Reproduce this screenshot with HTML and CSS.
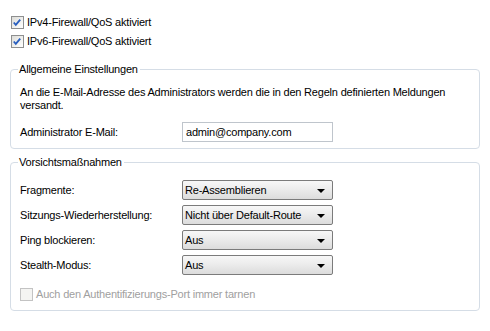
FILE: index.html
```html
<!DOCTYPE html>
<html>
<head>
<meta charset="utf-8">
<link rel="stylesheet" href="styles.css">
</head>
<body>
<div class="page">
  <label class="check-row">
    <span class="cb"><svg width="13" height="13" viewBox="0 0 13 13"><path d="M3 6.5 L5.2 9 L10 3.5" fill="none" stroke="#2a5fbf" stroke-width="2"/></svg></span>
    <span>IPv4-Firewall/QoS aktiviert</span>
  </label>
  <label class="check-row">
    <span class="cb"><svg width="13" height="13" viewBox="0 0 13 13"><path d="M3 6.5 L5.2 9 L10 3.5" fill="none" stroke="#2a5fbf" stroke-width="2"/></svg></span>
    <span>IPv6-Firewall/QoS aktiviert</span>
  </label>

  <fieldset class="group group-general">
    <legend>Allgemeine Einstellungen</legend>
    <div class="group-body">
      <p class="desc">An die E-Mail-Adresse des Administrators werden die in den Regeln definierten Meldungen versandt.</p>
      <div class="form-row first">
        <span class="lbl">Administrator E-Mail:</span>
        <span class="textbox">admin@company.com</span>
      </div>
    </div>
  </fieldset>

  <fieldset class="group group-safety">
    <legend>Vorsichtsmaßnahmen</legend>
    <div class="group-body">
      <div class="form-row first">
        <span class="lbl">Fragmente:</span>
        <span class="select">Re-Assemblieren<i class="arrow"></i></span>
      </div>
      <div class="form-row">
        <span class="lbl">Sitzungs-Wiederherstellung:</span>
        <span class="select">Nicht über Default-Route<i class="arrow"></i></span>
      </div>
      <div class="form-row">
        <span class="lbl">Ping blockieren:</span>
        <span class="select">Aus<i class="arrow"></i></span>
      </div>
      <div class="form-row">
        <span class="lbl">Stealth-Modus:</span>
        <span class="select">Aus<i class="arrow"></i></span>
      </div>
      <label class="check-row disabled">
        <span class="cb cb-disabled"></span>
        <span>Auch den Authentifizierungs-Port immer tarnen</span>
      </label>
    </div>
  </fieldset>
</div>
</body>
</html>
```

FILE: styles.css
```css
html, body {
  margin: 0;
  padding: 0;
  background: #ffffff;
}
body {
  font-family: "Liberation Sans", Arial, sans-serif;
  font-size: 11px;
  letter-spacing: -0.2px;
  color: #000;
}
.page {
  width: 470px;
  padding: 13px 10px 0 10px;
}
.check-row {
  display: flex;
  align-items: center;
  height: 19px;
  line-height: 13px;
}
.page > .check-row {
  padding-left: 1px;
}
.cb {
  width: 11px;
  height: 11px;
  border: 1px solid #8e8f8f;
  background: linear-gradient(135deg, #dcdcd8 0%, #f6f6f4 70%, #ffffff 100%);
  margin-right: 3px;
  display: inline-flex;
  flex: none;
}
.cb svg {
  margin: -1px 0 0 -1px;
}
.cb-disabled {
  border-color: #c3c3c3;
  background: #f4f4f2;
}
.check-row.disabled {
  color: #a0a0a0;
  margin-top: 10px;
  padding-left: 0;
}
.group {
  margin: 0;
  padding: 0;
  border: 1px solid #d5dde6;
  border-radius: 4px;
  min-width: 0;
}
.group legend {
  margin-left: 7px;
  padding: 0 2px 0 1px;
  line-height: 13px;
}
.group-general {
  margin-top: 12px;
}
.group-safety {
  margin-top: 7px;
}
.group-body {
  padding: 0 9px 6px 9px;
}
.desc {
  margin: 10px 0 0 0;
  line-height: 13px;
}
.form-row {
  display: flex;
  align-items: center;
  margin-top: 5px;
}
.group-general .form-row.first {
  margin-top: 10px;
}
.group-safety .form-row.first {
  margin-top: 11px;
}
.lbl {
  width: 162px;
  flex: none;
}
.textbox {
  box-sizing: border-box;
  width: 151px;
  height: 20px;
  border: 1px solid #bfc5cc;
  padding: 0 3px;
  line-height: 18px;
  background: #fff;
}
.select {
  position: relative;
  box-sizing: border-box;
  width: 151px;
  height: 20px;
  border: 1px solid #7b7b7b;
  border-radius: 2px;
  padding: 0 2px;
  line-height: 18px;
  background: linear-gradient(to bottom, #f7f7f7 0%, #ececec 45%, #dcdcdc 100%);
}
.arrow {
  position: absolute;
  right: 7px;
  top: 8px;
  width: 0;
  height: 0;
  border-left: 4px solid transparent;
  border-right: 4px solid transparent;
  border-top: 4px solid #000;
}
```
